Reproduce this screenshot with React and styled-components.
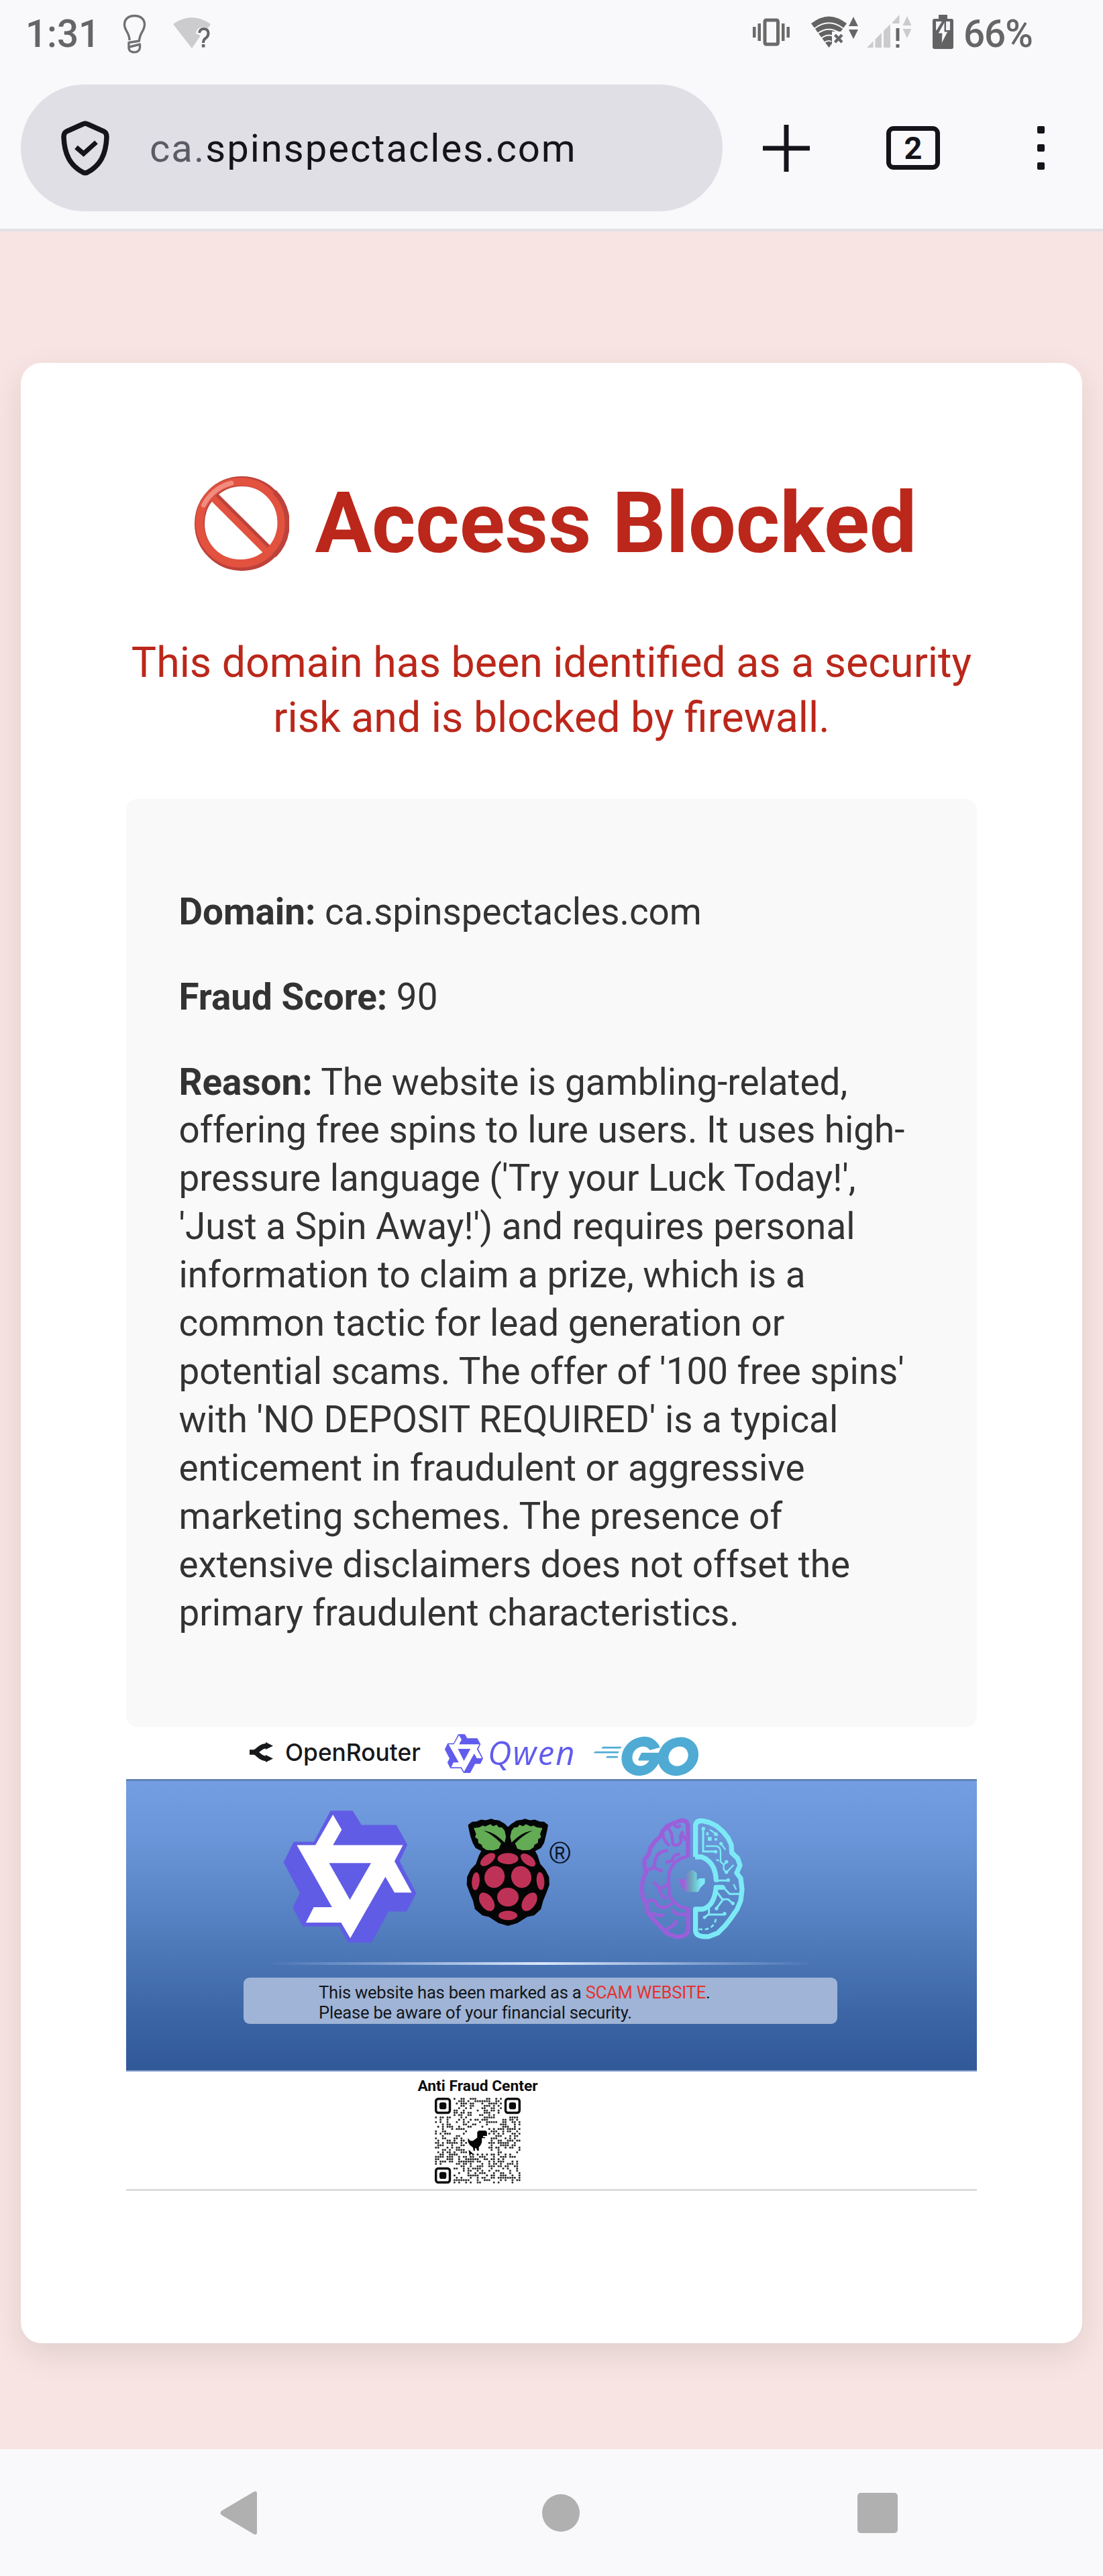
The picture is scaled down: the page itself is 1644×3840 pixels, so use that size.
import React from "react";
import styled, { createGlobalStyle } from "styled-components";
import { SiGo } from "react-icons/si";

const GlobalStyle = createGlobalStyle`
  *, *::before, *::after { box-sizing: border-box; }
  html, body { margin: 0; padding: 0; background: #f8e5e3; }
  body { font-family: Roboto, "Liberation Sans", sans-serif; color: #333; }
  svg { display: block; flex: none; }
`;

const Screen = styled.div`
  width: 1644px;
  height: 3840px;
  display: flex;
  flex-direction: column;
  overflow: hidden;
  background: #f8e5e3;
`;

/* ---------- browser chrome ---------- */
const StatusBar = styled.header`
  height: 102px;
  display: flex;
  align-items: center;
  padding: 0 104px 0 38px;
  background: #f9f9fc;
  color: #666;
  font-size: 56.5px;
  font-weight: 500;
  line-height: 66px;
`;

const Clock = styled.span`
  width: 145px;
`;

const StatusRight = styled.div`
  margin-left: auto;
  display: flex;
  align-items: center;
`;

const BatteryText = styled.span`
  display: block;
  width: 104px;
  letter-spacing: -1px;
  white-space: nowrap;
`;

const Toolbar = styled.div`
  height: 243px;
  display: flex;
  align-items: center;
  padding: 0 0 2px 31px;
  background: #f9f9fc;
  border-bottom: 4px solid #e1e1e5;
`;

const AddressPill = styled.div`
  width: 1046px;
  height: 189px;
  border-radius: 95px;
  background: #e0dfe5;
  display: flex;
  align-items: center;
  padding-left: 60px;
  color: #15141a;
`;

const Address = styled.span`
  margin-left: 60px;
  font-size: 58px;
  line-height: 68px;
  letter-spacing: 2px;
  white-space: nowrap;
`;

const Muted = styled.span`
  color: #5b5b66;
`;

const TabCount = styled.div`
  width: 80px;
  height: 65px;
  margin-left: 114px;
  border: 7px solid #15141a;
  border-radius: 11px;
  display: flex;
  align-items: center;
  justify-content: center;
  font-size: 47px;
  line-height: 47px;
  font-weight: 700;
  color: #15141a;
`;

const MenuDots = styled.div`
  margin-left: 145px;
  display: flex;
  flex-direction: column;
  gap: 16px;
`;

const Dot = styled.i`
  width: 11px;
  height: 11px;
  border-radius: 2px;
  background: #15141a;
`;

/* ---------- page ---------- */
const Page = styled.main`
  height: 3306px;
  padding: 196px 31px 0;
  background: #f8e5e3;
`;

const Card = styled.section`
  height: 2952px;
  padding: 157px;
  border-radius: 31px;
  background: #fff;
  box-shadow: 0 16px 47px rgba(0, 0, 0, 0.1);
`;

const Title = styled.h1`
  margin: 0 0 84px;
  padding-left: 12px;
  display: flex;
  align-items: center;
  justify-content: center;
  gap: 39px;
  font-size: 125.5px;
  line-height: 165px;
  font-weight: 700;
  color: #bb271a;
  white-space: nowrap;
`;

const Lead = styled.p`
  margin: 0 0 79px;
  font-size: 62.65px;
  line-height: 82.4px;
  text-align: center;
  color: #bb271a;
`;

const Details = styled.div`
  height: 1383px;
  padding: 78.4px;
  border-radius: 16px;
  background: #f9f9f9;
`;

const Detail = styled.p`
  margin: 54.8px 0;
  font-size: 54.8px;
  line-height: 71.96px;
  color: #333;
`;

/* ---------- banner ---------- */
const Banner = styled.div`
  height: 692px;
  border-bottom: 3px solid #dcdcdc;
`;

const Partners = styled.div`
  height: 78px;
  display: flex;
  align-items: flex-start;
  padding: 0 0 0 184px;
`;

const OpenRouterName = styled.span`
  margin: 18px 0 0 18px;
  width: 238px;
  font-family: Inter, Roboto, sans-serif;
  font-weight: 500;
  font-size: 35.3px;
  line-height: 42px;
  color: #16181b;
`;

const QwenName = styled.span`
  margin: 6px 0 0 7px;
  width: 158px;
  font-family: "Open Sans", sans-serif;
  font-style: italic;
  font-weight: 500;
  font-size: 49px;
  letter-spacing: 2.2px;
  line-height: 64px;
  color: #615ced;
`;

const Hero = styled.div`
  height: 436px;
  border-top: 3px solid #6283b8;
  border-bottom: 2px solid #7f9bc9;
  background: linear-gradient(#739ee2 0%, #6a95d8 20%, #4c77b7 60%, #3a64a4 82%, #315998 100%);
`;

const HeroLogos = styled.div`
  height: 270px;
  display: flex;
  align-items: flex-start;
  padding: 0 0 0 235px;
`;

const Shine = styled.div`
  width: 812px;
  height: 4px;
  margin: 0 0 19px 212px;
  background: linear-gradient(90deg, rgba(200, 220, 250, 0) 0%, #7f9ecf 20%, #dbe8fa 50%, #7f9ecf 80%, rgba(200, 220, 250, 0) 100%);
`;

const Notice = styled.div`
  width: 885px;
  height: 69px;
  margin-left: 175px;
  padding: 7px 0 0 112px;
  border-radius: 9px;
  background: #9fb4d6;
  color: #14161a;
  font-size: 25.6px;
  letter-spacing: -0.23px;
  line-height: 30px;
  white-space: nowrap;
`;

const Alert = styled.span`
  color: #e5322d;
`;

const Center = styled.div`
  width: 182px;
  margin-left: 433px;
  padding-top: 9px;
  display: flex;
  flex-direction: column;
  align-items: center;
  gap: 4px;
`;

const CenterName = styled.strong`
  font-size: 22.8px;
  line-height: 26px;
  font-weight: 700;
  color: #0c0c0c;
  white-space: nowrap;
`;

const NavBar = styled.footer`
  height: 189px;
  display: flex;
  align-items: center;
  padding-left: 328px;
  background: #f9f9fc;
`;

const HomeButton = styled.div`
  width: 56px;
  height: 56px;
  margin-left: 425px;
  border-radius: 50%;
  background: #b0b0b0;
`;

const RecentsButton = styled.div`
  width: 60px;
  height: 60px;
  margin-left: 414px;
  border-radius: 5px;
  background: #b0b0b0;
`;

const Spaced = styled.div`
  margin: ${(p) => p.$top || 0}px 0 0 ${(p) => p.$left || 0}px;
`;

const GoMark = styled(SiGo)`
  width: 156px;
  height: 60px;
  color: #4fabd3;
`;

/* ---------- status icons ---------- */
const Bulb = () => (
  <svg width="36" height="60" viewBox="0 0 36 60" fill="none" stroke="#717171" strokeWidth="3.4" strokeLinejoin="round">
    <path d="M10 39 C10 27 2.5 25 2.5 15.5 C2.5 7 9 2.5 17.5 2.5 C26 2.5 32.500 7 32.500 15.500 C32.500 25 25 28 24.500 40 L9 42.500 L9 51 C10 59 25 59 25.500 50 V45 L10 49" />
  </svg>
);

const WifiUnknown = () => (
  <svg width="60" height="48" viewBox="0 0 60 48">
    <path d="M2 11 Q30 -9 58 11 L54 17 Q38 12 36 25 L43 28 L30 47 Z" fill="#ccccce" />
    <path d="M41 24 Q42 18 47.500 18 Q54.500 18 54.500 25 Q54.500 29 50.500 32 Q47 34 47 39" fill="none" stroke="#666" strokeWidth="4" />
    <rect x="44.800" y="41" width="4.600" height="4.500" fill="#666" />
  </svg>
);

const Vibrate = () => (
  <svg width="56" height="42" viewBox="0 0 56 42" fill="#6a6a6a">
    <rect x="0" y="13" width="4.500" height="16" />
    <rect x="7.500" y="8" width="4.500" height="26" />
    <rect x="18" y="3" width="19.500" height="36" rx="2" fill="none" stroke="#6a6a6a" strokeWidth="5" />
    <rect x="43" y="8" width="4.500" height="26" />
    <rect x="50.500" y="13" width="4.500" height="16" />
  </svg>
);

const Wifi = () => (
  <svg width="70" height="48" viewBox="0 0 70 48">
    <path d="M0 11 Q26.500 -10 53 11 L26.500 47 Z" fill="#636363" />
    <g fill="none" stroke="#f9f9fc" strokeWidth="1.800">
      <path d="M5 18.500 Q26.500 2 48 18.500" />
      <path d="M10 25.500 Q26.500 14 43 25.500" />
      <path d="M15 33 Q26.500 24 38 33" />
      <path d="M19 40 Q25 35 30 38" />
    </g>
    <path d="M31 23 H52 V44 H31 Z" fill="#f9f9fc" />
    <path d="M35.500 28 L46 39 M46 28 L35.500 39" stroke="#666" strokeWidth="4.200" />
    <path d="M63 1 L70 15 H56 Z M56 20 H70 L63 34 Z" fill="#666" />
  </svg>
);

const Signal = () => (
  <svg width="67" height="50" viewBox="0 0 67 50" fill="#cbcbcd">
    <path d="M0 49 L9.500 39.500 V49 Z M12.500 36.500 L22 27 V49 H12.500 Z M25 24 L35 14 V49 H25 Z M38 11.500 L48.500 0 V13 H38 Z" />
    <path d="M60 2 L66.500 16 H53.500 Z M53.500 21 H66.500 L60 35 Z" />
    <path d="M43.500 20 H48.500 V39 H43.500 Z M43.500 44 H48.500 V49 H43.500 Z" fill="#666" />
  </svg>
);

const Battery = () => (
  <svg width="31" height="51" viewBox="0 0 31 51">
    <path d="M9 0 H22 V6 H28 Q31 6 31 9 V48 Q31 51 28 51 H3 Q0 51 0 48 V9 Q0 6 3 6 H9 Z" fill="#636363" />
    <path d="M5 10 H14 L6 23 H5 Z M20 10 H26 V23 H20 Z" fill="#f3f3f6" />
    <path d="M18 10 L8 28 H14 L13 44 L23 25 H18 Z" fill="#f9f9fc" stroke="#636363" strokeWidth="1" />
  </svg>
);

const Shield = () => (
  <svg width="72" height="82" viewBox="0 0 72 82" fill="none" stroke="#15141a">
    <path d="M32.500 5 Q36 3 39.500 5 L64 16 Q68 18 68 24 C67 51 58 67 40 76.500 Q36 79 32 76.500 C14 67 5 51 4 24 Q4 18 8 16 Z" strokeWidth="7.500" strokeLinejoin="round" />
    <path d="M22.500 39.500 L33.500 49 L52.500 32" strokeWidth="7" />
  </svg>
);

const Plus = () => (
  <svg width="70" height="70" viewBox="0 0 70 70" stroke="#15141a" strokeWidth="7">
    <path d="M35 0 V70 M0 35 H70" />
  </svg>
);

const NoEntry = () => (
  <svg width="141" height="141" viewBox="0 0 141 141" fill="none">
    <circle cx="70.500" cy="70.500" r="63" stroke="#bd423b" strokeWidth="15" />
    <path d="M29 31 L111 113" stroke="#e2523f" strokeWidth="14" />
    <path d="M33 27.500 L115 109" stroke="#bd423b" strokeWidth="5" />
    <circle cx="68.500" cy="69" r="61" stroke="#e2523f" strokeWidth="12" />
    <path d="M119 23 A68 68 0 0 1 119 118" stroke="#bd423b" strokeWidth="7" />
    <path d="M13.500 43 A64 64 0 0 1 55 10" stroke="#f18d80" strokeWidth="7" strokeLinecap="round" />
  </svg>
);

/* ---------- brand drawings ---------- */
const OpenRouterMark = () => (
  <svg width="35" height="30" viewBox="0 0 35 30" fill="none" stroke="#16181b">
    <path d="M0 15 H7 C14 13 15 5.500 26 5.500 M7 15 C14 17 15 24.500 26 24.500" strokeWidth="7.500" />
    <path d="M24 0 L35 5.500 L24 11 Z M24 19 L35 24.500 L24 30 Z" fill="#16181b" stroke="none" />
  </svg>
);

const STAR =
  "M193 90 H258 L285 154 H392 L425 240 L401 313 L452 455 L424 535 H368 L316 674 H248 L219 602 H108 L78 520 L100 455 L50 318 L80 229 H142 Z";
const STAR_FACE =
  "M199 105 L226 172 L199 241 H414 L388 313 L441 453 H388 L360 383 L252 657 L224 587 H116 L140 518 H196 L88 241 H145 Z";

const QwenMark = () => (
  <svg width="197" height="197" viewBox="48 87 406 590" preserveAspectRatio="none">
    <path d={STAR} fill="#615ce5" stroke="#615ce5" strokeWidth="5" strokeLinejoin="round" />
    <path d={STAR_FACE} fill="#fff" />
    <path d="M187 321 H316 L251 485 Z" fill="#615ce5" />
  </svg>
);

const QwenSmallMark = () => (
  <svg width="57" height="58" viewBox="48 87 406 590" preserveAspectRatio="none">
    <path d={STAR} fill="#615ced" stroke="#615ced" strokeWidth="6" strokeLinejoin="round" />
    <path d={STAR_FACE} fill="#fff" />
    <path d="M187 312 H320 L251 495 Z" fill="#615ced" />
  </svg>
);

const BERRIES = [
  [676, 307, 17, 33, 33], [738, 303, 32, 25, 0], [800, 309, 17, 33, -33],
  [697, 385, 31, 49, 4], [779, 385, 31, 49, -4],
  [639, 404, 12, 40, 3], [838, 403, 12, 40, -3],
  [738, 475, 33, 42, 0], [673, 496, 21, 43, -18], [804, 496, 21, 43, 18],
  [738, 557, 29, 21, 0],
];

const Raspberry = () => (
  <svg width="156" height="160" viewBox="610 124 321.800 480" preserveAspectRatio="none">
    <path
      d="M738 164 L727 148 L711 134 L696 131 L687 126 L670 133 L656 130 L642 138 L628 140 L617 153 L620 176 L624 202 L631 232 L640 255 L658 268 L650 290 L641 327 L625 352 L614 385 L613 420 L622 455 L632 490 L638 528 L660 555 L680 562 L710 590 L738 602 L766 590 L797 562 L818 555 L838 528 L845 490 L855 455 L864 420 L863 385 L851 352 L836 327 L828 290 L820 268 L838 255 L848 232 L853 202 L857 176 L860 153 L849 140 L835 138 L820 130 L806 133 L790 126 L781 131 L765 134 L750 148 Z"
      fill="#050505"
      stroke="#050505"
      strokeLinejoin="round"
      strokeWidth="3"
    />
    <g fill="#63ab55">
      <path d="M633 166 L650 163 L661 155 L668 159 L684 149 L692 158 L704 152 L709 162 L720 164 L728 178 L732 205 L728 231 C710 207 695 185 663 177 C689 194 704 216 717 234 L710 258 L694 266 L672 264 L660 252 L657 240 L647 233 L646 216 L637 207 L640 192 Z" />
      <path d="M844 166 L827 163 L816 155 L809 159 L793 149 L785 158 L773 152 L768 162 L757 164 L749 178 L745 205 L749 231 C767 207 782 185 814 177 C788 194 773 216 760 234 L767 258 L783 266 L805 264 L817 252 L820 240 L830 233 L831 216 L840 207 L837 192 Z" />
    </g>
    <g fill="#bf3257">
      {BERRIES.map(([cx, cy, rx, ry, a], i) => (
        <ellipse key={i} cx={cx} cy={cy} rx={rx} ry={ry} transform={`rotate(${a} ${cx} ${cy})`} />
      ))}
    </g>
    <ellipse cx="898" cy="276" rx="29" ry="46" fill="none" stroke="#0b1524" strokeWidth="5" />
    <g transform="translate(898 304) scale(1 1.454)">
      <text textAnchor="middle" fontFamily="Liberation Sans, sans-serif" fontSize="54" fontWeight="400" stroke="#0b1524" strokeWidth="1.200" fill="#0b1524" textLength="32" lengthAdjust="spacingAndGlyphs">R</text>
    </g>
  </svg>
);

const Brain = () => (
  <svg width="180" height="200" viewBox="0 0 540 600" fill="none" strokeLinejoin="round">
    <defs>
      <linearGradient id="leaf" x1="0" x2="1" y1="0" y2="0">
        <stop offset="0.200" stopColor="#a060dc" />
        <stop offset="0.450" stopColor="#6aa2b8" />
        <stop offset="0.850" stopColor="#7deaf5" />
      </linearGradient>
    </defs>
    <g stroke="#9a5fda" strokeWidth="14">
      <path strokeWidth="19" d="M244 205 V60 Q236 38 212 42 L178 54 L150 67 L130 90 L122 112 L98 133 L75 165 L70 190 L50 217 L50 245 L57 272 L42 310 L37 350 L44 390 L58 412 L62 448 L88 482 L120 515 L150 546 L190 561 Q236 564 245 535 V430" />
      <path d="M244 202 Q170 214 158 290 L160 370 Q180 424 244 436" />
      <path d="M150 68 C180 100 170 125 178 148 Q205 162 214 130 Q204 108 224 92" />
      <path d="M132 98 Q134 135 162 154 M184 62 Q196 78 212 62 M220 106 L236 130" />
      <path d="M64 262 Q96 258 96 225 Q104 178 154 176 M92 253 L130 268 M208 192 Q172 194 176 222 L144 228" />
      <path d="M158 310 Q152 340 118 344 L90 316 M116 346 Q124 388 150 390" />
      <path d="M58 406 Q92 386 104 412 Q118 440 154 426 L176 410 M78 452 Q110 474 138 462" />
      <path d="M150 544 C146 510 196 520 190 486 M172 440 Q190 468 236 460" />
    </g>
    <g stroke="#7ceaf6">
      <path strokeWidth="22" d="M278 204 V62 Q282 40 310 43 L340 50 L372 66 L402 92 L424 120 L438 150 L440 186 L466 210 L477 242 L462 276 L480 300 L486 350 L480 400 L464 438 L438 476 L410 512 L378 544 L338 560 Q282 564 278 536 V438 H310 Q362 424 370 340 L404 340" />
      <path strokeWidth="22" d="M276 204 H304 Q366 226 370 306 H380" />
      <path strokeWidth="9" d="M312 82 V180 H366 M370 310 H424 M404 342 L430 370 H478 M372 360 L400 396 L372 434 M400 394 H424 L444 412 M338 434 V462 H408 M338 460 L316 476" />
      <path strokeWidth="7" d="M324 156 H372 Q390 160 390 184 V226 L404 238 V260 L416 274 L448 240 M384 222 L370 216 M404 240 L416 226 M342 82 L378 108 M388 140 L412 172 M448 326 L460 350" />
      <path strokeWidth="8" strokeDasharray="17 11" d="M292 528 H322 Q362 522 370 478" />
      <g fill="#7ceaf6" stroke="none">
        <rect x="333" y="115" width="17" height="17" /><rect x="361" y="95" width="15" height="15" />
        <rect x="363" y="120" width="12" height="11" /><rect x="326" y="94" width="10" height="14" />
        <circle cx="313" cy="78" r="8" /><circle cx="368" cy="181" r="8" /><circle cx="416" cy="226" r="8" />
        <circle cx="416" cy="272" r="8" /><circle cx="424" cy="308" r="8" /><circle cx="404" cy="341" r="8" />
        <circle cx="445" cy="412" r="8" /><circle cx="372" cy="435" r="8" /><circle cx="408" cy="458" r="8" />
        <circle cx="392" cy="145" r="8" /><circle cx="318" cy="475" r="7" />
      </g>
    </g>
    <path fill="url(#leaf)" d="M201 303 H230 L238 310 V282 L256 264 H270 L284 278 V308 L295 300 H320 V322 L300 342 L290 361 H236 L216 342 Z" />
  </svg>
);

/* ---------- QR code ---------- */
const QR_SIZE = 37;

const inFinder = (x, y) => (x < 8 && y < 8) || (x > 28 && y < 8) || (x < 8 && y > 28);
const inBadge = (x, y) => x > 13 && x < 23 && y > 12 && y < 24;

const buildModules = () => {
  const cells = [];
  let seed = 90731;
  for (let y = 0; y < QR_SIZE; y += 1) {
    for (let x = 0; x < QR_SIZE; x += 1) {
      seed = (seed * 16807) % 2147483647;
      if (!inFinder(x, y) && !inBadge(x, y) && seed / 2147483647 < 0.48) cells.push([x, y]);
    }
  }
  return cells;
};

const MODULES = buildModules();

const Finder = ({ x, y }) => (
  <g>
    <rect x={x + 0.5} y={y + 0.5} width="6" height="6" rx="1" fill="none" stroke="#0b0b0b" />
    <rect x={x + 2} y={y + 2} width="3" height="3" rx="0.900" fill="#0b0b0b" />
  </g>
);

const QrCode = () => (
  <svg width="128" height="128" viewBox="0 0 37 37">
    <g fill="#2a2a2a">
      {MODULES.map(([x, y]) => (
        <rect key={`${x}-${y}`} x={x + 0.1} y={y + 0.1} width="0.800" height="0.800" rx="0.250" />
      ))}
    </g>
    <Finder x={0} y={0} />
    <Finder x={30} y={0} />
    <Finder x={0} y={30} />
    <path
      fill="#070707"
      d="M19 14.200 H22 L22.500 14.800 V16.500 H20.800 V17 H21.700 V17.400 H20.300 V19.200 L19.700 20.500 L19 21.300 V22.800 H18.300 L17.800 21.600 L17.300 22 V22.900 H16.700 L16.500 21.500 L15 20.300 L14.300 19 V17.400 L15.300 18.600 L16.500 18.600 L18.300 17.200 V14.800 Z"
    />
    <path fill="#070707" d="M14.600 22.400 L16.600 24.200 L15.600 24.300 L15 25.300 Z" />
  </svg>
);

const BackButton = () => (
  <svg width="55" height="66" viewBox="0 0 55 66" fill="#b0b0b0">
    <path d="M51 1 Q55 0 55 4 V62 Q55 66 51 65 L2 36 Q-1 33 2 30 Z" />
  </svg>
);

export default function App() {
  return (
    <Screen>
      <GlobalStyle />
      <StatusBar>
        <Clock>1:31</Clock>
        <Bulb />
        <Spaced $left={37} $top={-4}>
          <WifiUnknown />
        </Spaced>
        <StatusRight>
          <Spaced $top={-7}><Vibrate /></Spaced>
          <Spaced $left={31} $top={-7}><Wifi /></Spaced>
          <Spaced $left={13} $top={-8}><Signal /></Spaced>
          <Spaced $left={31} $top={-7}><Battery /></Spaced>
          <Spaced $left={15}><BatteryText>66%</BatteryText></Spaced>
        </StatusRight>
      </StatusBar>

      <Toolbar>
        <AddressPill>
          <Shield />
          <Address>
            <Muted>ca.</Muted>spinspectacles.com
          </Address>
        </AddressPill>
        <Spaced $left={60}><Plus /></Spaced>
        <TabCount>2</TabCount>
        <MenuDots>
          <Dot />
          <Dot />
          <Dot />
        </MenuDots>
      </Toolbar>

      <Page>
        <Card>
          <Title>
            <NoEntry />
            Access Blocked
          </Title>
          <Lead>This domain has been identified as a security risk and is blocked by firewall.</Lead>
          <Details>
            <Detail><strong>Domain:</strong> ca.spinspectacles.com</Detail>
            <Detail><strong>Fraud Score:</strong> 90</Detail>
            <Detail>
              <strong>Reason:</strong> The website is gambling-related, offering free spins to lure users. It uses
              high-pressure language ('Try your Luck Today!', 'Just a Spin Away!') and requires personal information to
              claim a prize, which is a common tactic for lead generation or potential scams. The offer of '100 free
              spins' with 'NO DEPOSIT REQUIRED' is a typical enticement in fraudulent or aggressive marketing schemes.
              The presence of extensive disclaimers does not offset the primary fraudulent characteristics.
            </Detail>
          </Details>
          <Banner>
            <Partners>
              <Spaced $top={23}><OpenRouterMark /></Spaced>
              <OpenRouterName>OpenRouter</OpenRouterName>
              <Spaced $top={11}><QwenSmallMark /></Spaced>
              <QwenName>Qwen</QwenName>
              <Spaced $top={14}>
                <GoMark viewBox="0 7.400 24 9.200" />
              </Spaced>
            </Partners>
            <Hero>
              <HeroLogos>
                <Spaced $top={44}><QwenMark /></Spaced>
                <Spaced $top={56} $left={75}><Raspberry /></Spaced>
                <Spaced $top={45} $left={93}><Brain /></Spaced>
              </HeroLogos>
              <Shine />
              <Notice>
                This website has been marked as a <Alert>SCAM WEBSITE</Alert>.
                <br />
                Please be aware of your financial security.
              </Notice>
            </Hero>
            <Center>
              <CenterName>Anti Fraud Center</CenterName>
              <QrCode />
            </Center>
          </Banner>
        </Card>
      </Page>

      <NavBar>
        <BackButton />
        <HomeButton />
        <RecentsButton />
      </NavBar>
    </Screen>
  );
}
